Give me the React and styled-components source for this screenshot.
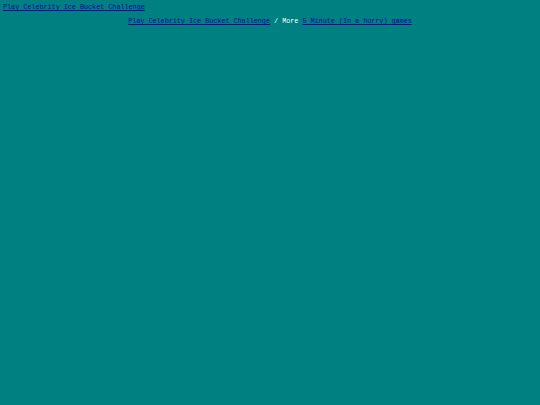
import React from "react";
import styled, { createGlobalStyle } from "styled-components";

const Global = createGlobalStyle`
  html, body { margin: 0; padding: 0; background: #008080; }
  body { font-family: "Liberation Mono", "DejaVu Sans Mono", monospace; font-size: 6.75px; color: #ffffff; }
`;

const Page = styled.div`
  padding: 3px 3px;
  min-height: 399px;
`;

const TopLink = styled.a`
  display: block;
  color: #0000b0;
  text-decoration: underline;
  line-height: 8px;
`;

const Crumbs = styled.div`
  margin-top: 6px;
  text-align: center;
  line-height: 8px;
  color: #ffffff;
`;

const Link = styled.a`
  color: #0000b0;
  text-decoration: underline;
`;

export default function App() {
  return (
    <>
      <Global />
      <Page>
        <TopLink href="#">Play Celebrity Ice Bucket Challenge</TopLink>
        <Crumbs>
          <Link href="#">Play Celebrity Ice Bucket Challenge</Link> / More{" "}
          <Link href="#">5 Minute (In a hurry) games</Link>
        </Crumbs>
      </Page>
    </>
  );
}
